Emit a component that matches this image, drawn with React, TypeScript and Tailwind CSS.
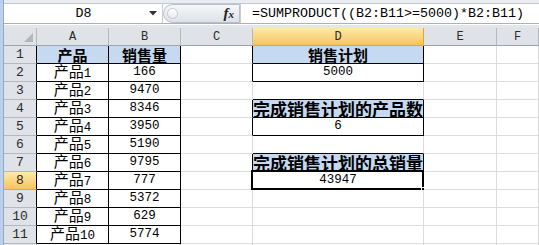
import type { ReactNode } from 'react'

const CJK = "font-['Noto_Sans_CJK_SC',sans-serif]"
const MONO = "font-['Liberation_Mono','Noto_Sans_CJK_SC',monospace]"

const COLS = ['A', 'B', 'C', 'D', 'E', 'F']
const SALES = [166, 9470, 8346, 3950, 5190, 9795, 777, 5372, 629, 5774]
const BOXED_D = [1, 2, 4, 5, 7, 8]

function Num({ v }: { v: ReactNode }) {
  return <span className={`${MONO} text-[12.5px] leading-none text-black`}>{v}</span>
}

function Head({ children, size = 'text-[15px]' }: { children: ReactNode; size?: string }) {
  return <span className={`${CJK} ${size} font-bold text-black whitespace-nowrap leading-none`}>{children}</span>
}

function Product({ n }: { n: number }) {
  return (
    <span className={`${CJK} whitespace-nowrap text-[15px] leading-[16px] text-black`}>
      产品<span className={`${MONO} text-[12.5px]`}>{n}</span>
    </span>
  )
}

function cellContent(row: number, col: number): { node?: ReactNode; blue?: boolean } {
  if (row === 1 && col === 0) return { node: <Head>产品</Head>, blue: true }
  if (row === 1 && col === 1) return { node: <Head>销售量</Head>, blue: true }
  if (row === 1 && col === 3) return { node: <Head>销售计划</Head>, blue: true }
  if (row >= 2 && row <= 11 && col === 0) return { node: <Product n={row - 1} /> }
  if (row >= 2 && row <= 11 && col === 1) return { node: <Num v={SALES[row - 2]} /> }
  if (row === 2 && col === 3) return { node: <Num v="5000" /> }
  if (row === 4 && col === 3) return { node: <Head size="text-[17px]">完成销售计划的产品数</Head>, blue: true }
  if (row === 5 && col === 3) return { node: <Num v="6" /> }
  if (row === 7 && col === 3) return { node: <Head size="text-[17px]">完成销售计划的总销量</Head>, blue: true }
  if (row === 8 && col === 3) return { node: <Num v="43947" /> }
  return {}
}

function Cell({ row, col }: { row: number; col: number }) {
  const inTable = row >= 1 && row <= 11 && col <= 1
  const blackR = inTable || ((col === 2 || col === 3) && BOXED_D.includes(row))
  const blackB = inTable || (col === 3 && row >= 1 && row <= 8)
  const { node, blue } = cellContent(row, col)
  const selected = row === 8 && col === 3
  return (
    <div
      className={`relative flex items-center justify-center border-r border-b ${
        blackR ? 'border-r-black' : 'border-r-[#dadcdd]'
      } ${blackB ? 'border-b-black' : 'border-b-[#dadcdd]'} ${blue ? 'bg-[#c5d9f1]' : 'bg-white'}`}
    >
      {node}
      {selected && (
        <>
          <div className="pointer-events-none absolute -left-[2px] -top-[2px] -right-[1px] -bottom-[1px] border-2 border-black" />
          <div className="absolute -right-[4px] -bottom-[4px] h-[6px] w-[6px] border border-white bg-black" />
        </>
      )}
    </div>
  )
}

function ColHeader({ label }: { label: string }) {
  const hot = label === 'D'
  return (
    <div
      className={`flex items-center justify-center border-r border-b ${
        hot
          ? 'bg-gradient-to-b from-[#fde9a9] to-[#f6c45d] border-r-[#e2a53c] border-b-[#e9a23a]'
          : 'bg-[#dfe3e8] border-r-[#b4b9c0] border-b-[#9ea4ac]'
      }`}
    >
      <span className={`${MONO} text-[12px] text-[#2b2b2b]`}>{label}</span>
    </div>
  )
}

function RowHeader({ n }: { n: number }) {
  const hot = n === 8
  return (
    <div
      className={`flex items-center justify-center border-r border-b ${
        hot
          ? 'bg-gradient-to-b from-[#fde9a9] to-[#f6c45d] border-b-[#e9a23a]'
          : 'bg-[#dfe3e8] border-b-[#b4b9c0]'
      } ${n <= 11 ? 'border-r-black' : 'border-r-[#9ea4ac]'}`}
    >
      {n <= 11 && <span className={`${MONO} text-[13px] text-[#2b2b2b]`}>{n}</span>}
    </div>
  )
}

function FormulaBar() {
  return (
    <div className="flex h-[28px] flex-col bg-[#e2e6eb]">
      <div className="h-[4px] border-b border-[#c3c9d1] bg-[#e9ecf0]" />
      <div className="flex h-[19px] bg-white">
        <div className="flex w-[159px] items-center border-r border-[#c8cdd4]">
          <span className={`${MONO} flex-1 pl-[14px] text-center text-[13.33px] text-black`}>D8</span>
          <svg width="8" height="5" viewBox="0 0 8 5" className="mr-[5px]">
            <polygon points="0,0 8,0 4,4.5" fill="#333" />
          </svg>
        </div>
        <div className="flex w-[77px] items-center rounded-l-full border border-[#b9bfc7] bg-gradient-to-b from-[#f6f7f9] to-[#dde1e6]">
          <div className="ml-[3px] h-[11px] w-[11px] rounded-full border border-[#c4c9cf] bg-gradient-to-b from-white to-[#e6e9ed]" />
          <span className="ml-auto mr-[5px] font-['Liberation_Serif',serif] text-[15px] font-bold italic leading-none text-[#1f1f1f]">
            f<span className="text-[11px]">x</span>
          </span>
        </div>
        <div className="flex flex-1 items-center border-l border-[#c8cdd4] pl-[11px]">
          <span className={`${MONO} whitespace-nowrap text-[13.33px] text-black`}>
            =SUMPRODUCT((B2:B11&gt;=5000)*B2:B11)
          </span>
        </div>
      </div>
      <div className="h-[5px] border-t border-[#aab1ba] bg-[#e2e6eb]">
        <div className="h-[1px] bg-white" />
      </div>
    </div>
  )
}

export default function App() {
  const rows = Array.from({ length: 12 }, (_, i) => i + 1)
  return (
    <div className="flex h-[245px] w-[539px] overflow-hidden bg-white">
      <div className="w-[4px] shrink-0 border-r border-[#8eaad0] bg-[#bcd0ea]" />
      <div className="flex min-w-0 flex-1 flex-col">
        <FormulaBar />
        <div className="grid h-[217px] grid-cols-[33px_72px_72px_72px_171px_73px_1fr] auto-rows-[18px] overflow-hidden">
          <div className="flex items-end justify-end border-r border-b border-r-[#b4b9c0] border-b-[#9ea4ac] bg-[#dfe3e8] p-[3px]">
            <svg width="9" height="9" viewBox="0 0 9 9">
              <polygon points="9,0 9,9 0,9" fill="#b3b8bf" />
            </svg>
          </div>
          {COLS.map((c) => (
            <ColHeader key={c} label={c} />
          ))}
          {rows.map((r) => (
            <div key={r} className="contents">
              <RowHeader n={r} />
              {COLS.map((_, ci) => (
                <Cell key={ci} row={r} col={ci} />
              ))}
            </div>
          ))}
        </div>
      </div>
    </div>
  )
}
